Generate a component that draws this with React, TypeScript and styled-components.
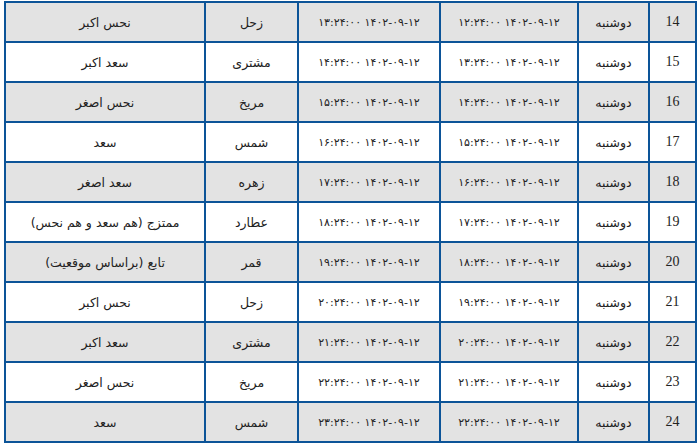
import React from "react";
import styled, { createGlobalStyle } from "styled-components";

const Global = createGlobalStyle`
  html, body { margin: 0; padding: 0; background: #ffffff; }
  body { font-family: "DejaVu Sans", "Noto Sans", sans-serif; }
`;

const Page = styled.div`
  padding: 1px 0 0 4px;
`;

const Grid = styled.div`
  direction: rtl;
  display: grid;
  grid-template-columns: 45px 69px 136px 140px 91px 198px;
  grid-auto-rows: 38px;
  gap: 2px;
  padding: 2px;
  width: 693px;
  box-sizing: border-box;
  background: #0c5498;
`;

type Kind = "num" | "time" | "word";

const Cell = styled.div<{ $shade: boolean; $kind: Kind }>`
  background: ${(p) => (p.$shade ? "#e3e3e3" : "#ffffff")};
  display: flex;
  align-items: center;
  justify-content: center;
  color: #222222;
  font-family: ${(p) =>
    p.$kind === "num" ? '"Liberation Serif", serif' : '"DejaVu Sans", sans-serif'};
  font-size: ${(p) =>
    p.$kind === "num" ? "14px" : p.$kind === "time" ? "11px" : "12.5px"};
  white-space: nowrap;
`;

const fa = (n: number) =>
  String(n)
    .padStart(2, "0")
    .replace(/\d/g, (d) => "۰۱۲۳۴۵۶۷۸۹"[Number(d)]);

const planets = ["زحل", "مشتری", "مریخ", "شمس", "زهره", "عطارد", "قمر"];
const qualities = [
  "نحس اکبر",
  "سعد اکبر",
  "نحس اصغر",
  "سعد",
  "سعد اصغر",
  "ممتزج (هم سعد و هم نحس)",
  "تابع (براساس موقعیت)",
];

const rows = Array.from({ length: 11 }, (_, i) => {
  const n = 14 + i;
  return {
    n,
    start: `۱۴۰۲-۰۹-۱۲ ${fa(n - 2)}:۲۴:۰۰`,
    end: `۱۴۰۲-۰۹-۱۲ ${fa(n - 1)}:۲۴:۰۰`,
    planet: planets[i % 7],
    quality: qualities[i % 7],
  };
});

export default function App() {
  return (
    <Page>
      <Global />
      <Grid>
        {rows.map((r) => {
          const s = r.n % 2 === 0;
          return (
            <React.Fragment key={r.n}>
              <Cell $shade={s} $kind="num">
                {r.n}
              </Cell>
              <Cell $shade={s} $kind="word">دوشنبه</Cell>
              <Cell $shade={s} $kind="time">{r.start}</Cell>
              <Cell $shade={s} $kind="time">{r.end}</Cell>
              <Cell $shade={s} $kind="word">{r.planet}</Cell>
              <Cell $shade={s} $kind="word">{r.quality}</Cell>
            </React.Fragment>
          );
        })}
      </Grid>
    </Page>
  );
}
